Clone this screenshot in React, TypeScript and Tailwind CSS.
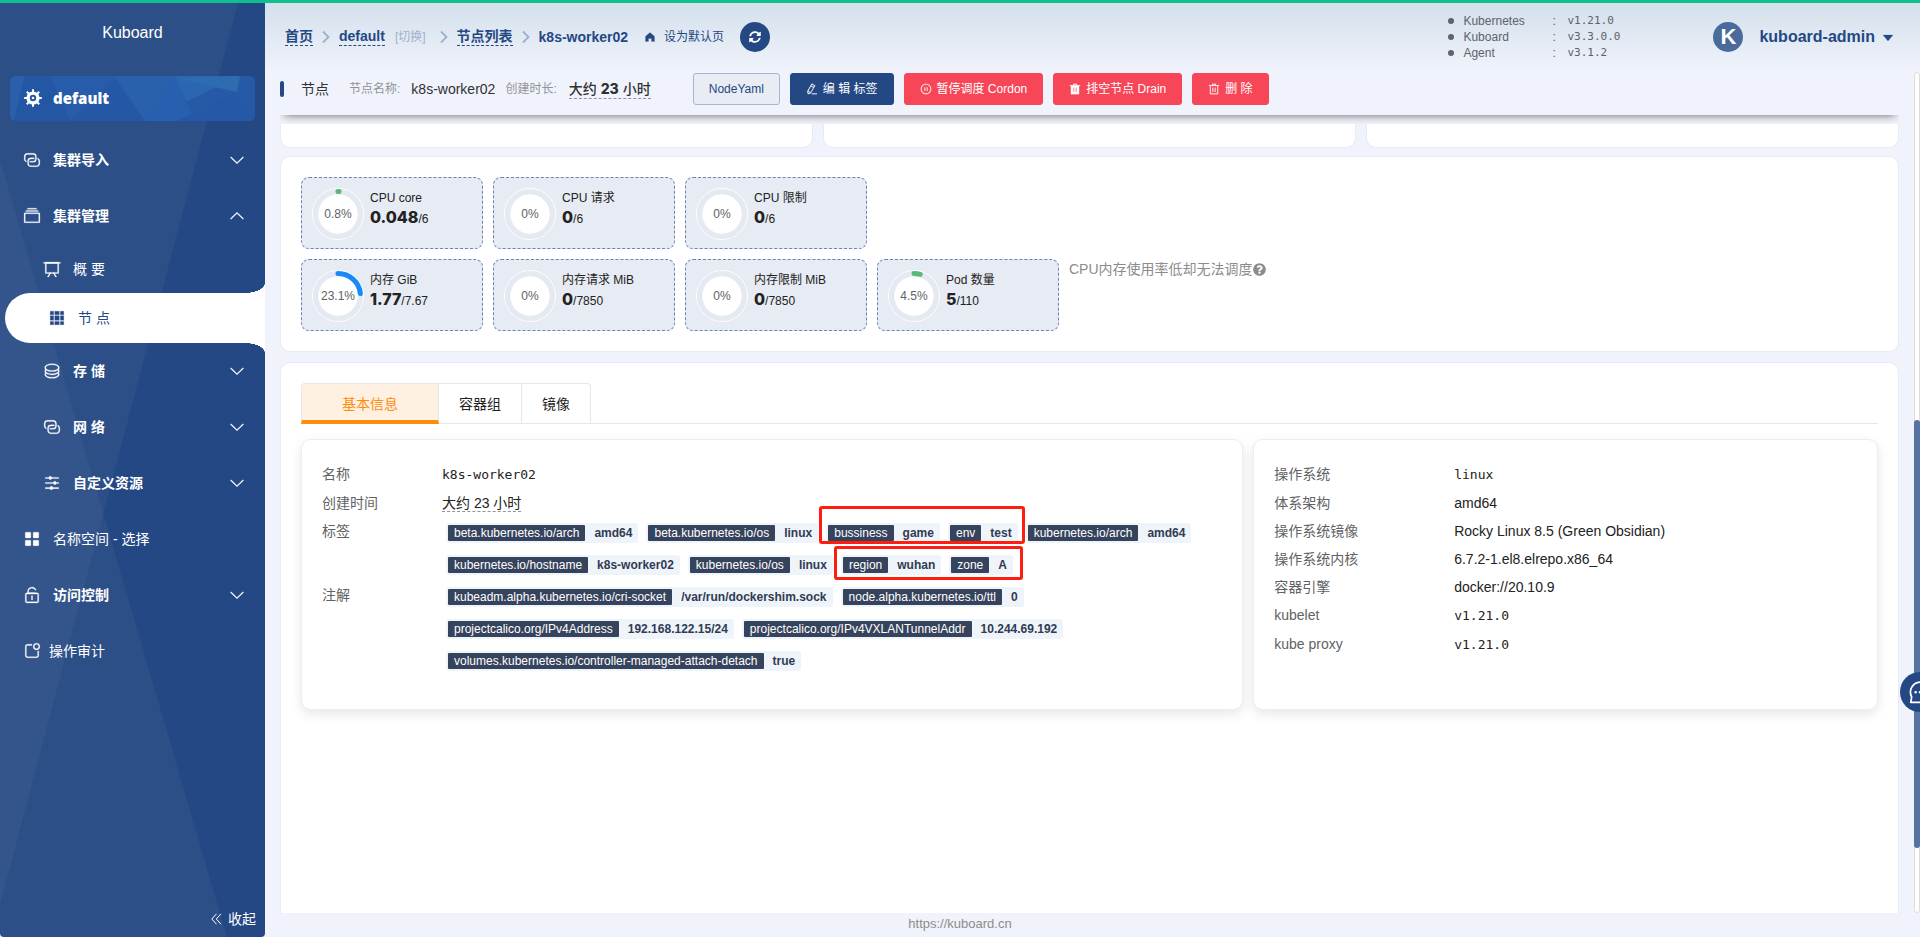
import React from "react";
import { FaQuestionCircle, FaSyncAlt } from "react-icons/fa";

const ICONS = {
  connection: [
    "M640 384v64H448a128 128 0 0 0-128 128v128a128 128 0 0 0 128 128h320a128 128 0 0 0 128-128V576a128 128 0 0 0-64-110.848V394.88c74.56 26.368 128 97.472 128 181.056v128a192 192 0 0 1-192 192H448a192 192 0 0 1-192-192V576a192 192 0 0 1 192-192h192z",
    "M384 640v-64h192a128 128 0 0 0 128-128V320a128 128 0 0 0-128-128H256a128 128 0 0 0-128 128v128a128 128 0 0 0 64 110.848v70.272A192.064 192.064 0 0 1 64 448V320a192 192 0 0 1 192-192h320a192 192 0 0 1 192 192v128a192 192 0 0 1-192 192H384z",
  ],
  files: [
    "M128 384v448h768V384H128zm-32-64h832a32 32 0 0 1 32 32v512a32 32 0 0 1-32 32H96a32 32 0 0 1-32-32V352a32 32 0 0 1 32-32zm64-128h704v64H160zm96-128h512v64H256z",
  ],
  board: [
    "M32 128h960v64H32z",
    "M192 192v512h640V192H192zm-64-64h768v608a32 32 0 0 1-32 32H160a32 32 0 0 1-32-32V128z",
    "M322.176 960H248.32l144.64-250.56 55.424 32L322.176 960zm453.888 0h-73.856L576 741.44l55.424-32L776.064 960z",
  ],
  grid: [
    "M640 384v256H384V384h256zm64 0h192v256H704V384zm-64 512H384V704h256v192zm64 0V704h192v192H704zm-64-768v192H384V128h256zm64 0h192v192H704V128zM320 384v256H128V384h192zm0 512H128V704h192v192zm0-768v192H128V128h192z",
  ],
  coin: [
    "m161.92 580.736 29.888 58.88C171.328 659.776 160 681.728 160 704c0 82.304 155.328 160 352 160s352-77.696 352-160c0-22.272-11.392-44.16-31.808-64.32l30.464-58.432C903.936 615.808 928 657.664 928 704c0 129.728-188.544 224-416 224S96 833.728 96 704c0-46.592 24.32-88.576 65.92-123.264z",
    "m161.92 388.736 29.888 58.88C171.328 467.84 160 489.792 160 512c0 82.304 155.328 160 352 160s352-77.696 352-160c0-22.272-11.392-44.16-31.808-64.32l30.464-58.432C903.936 423.808 928 465.664 928 512c0 129.728-188.544 224-416 224S96 641.728 96 512c0-46.592 24.32-88.576 65.92-123.264z",
    "M512 544c-227.456 0-416-94.272-416-224S284.544 96 512 96s416 94.272 416 224-188.544 224-416 224zm0-64c196.672 0 352-77.696 352-160S708.672 160 512 160s-352 77.696-352 160 155.328 160 352 160z",
  ],
  operation: [
    "M389.44 768a96.064 96.064 0 0 1 181.12 0H896v64H570.56a96.064 96.064 0 0 1-181.12 0H128v-64h261.44zm192-288a96.064 96.064 0 0 1 181.12 0H896v64H762.56a96.064 96.064 0 0 1-181.12 0H128v-64h453.44zm-256-288a96.064 96.064 0 0 1 181.12 0H896v64H506.56a96.064 96.064 0 0 1-181.12 0H128v-64h197.44z",
  ],
  menu: [
    "M160 448a32 32 0 0 1-32-32V160.064a32 32 0 0 1 32-32h256a32 32 0 0 1 32 32V416a32 32 0 0 1-32 32H160zm448 0a32 32 0 0 1-32-32V160.064a32 32 0 0 1 32-32h255.936a32 32 0 0 1 32 32V416a32 32 0 0 1-32 32H608zM160 896a32 32 0 0 1-32-32V608a32 32 0 0 1 32-32h256a32 32 0 0 1 32 32v256a32 32 0 0 1-32 32H160zm448 0a32 32 0 0 1-32-32V608a32 32 0 0 1 32-32h255.936a32 32 0 0 1 32 32v256a32 32 0 0 1-32 32H608z",
  ],
  unlock: [
    "M224 448a32 32 0 0 0-32 32v384a32 32 0 0 0 32 32h576a32 32 0 0 0 32-32V480a32 32 0 0 0-32-32H224zm0-64h576a96 96 0 0 1 96 96v384a96 96 0 0 1-96 96H224a96 96 0 0 1-96-96V480a96 96 0 0 1 96-96z",
    "M512 544a32 32 0 0 1 32 32v192a32 32 0 1 1-64 0V576a32 32 0 0 1 32-32zm178.304-295.296A192.064 192.064 0 0 0 320 320v64h352l96 38.4V448H256V320a256 256 0 0 1 493.76-95.104l-59.456 23.808z",
  ],
  notification: [
    "M512 128v64H256a64 64 0 0 0-64 64v512a64 64 0 0 0 64 64h512a64 64 0 0 0 64-64V512h64v256a128 128 0 0 1-128 128H256a128 128 0 0 1-128-128V256a128 128 0 0 1 128-128h256z",
    "M768 384a128 128 0 1 0 0-256 128 128 0 0 0 0 256zm0 64a192 192 0 1 1 0-384 192 192 0 0 1 0 384z",
  ],
  arrowDown: [
    "M831.872 340.864 512 652.672 192.128 340.864a30.592 30.592 0 0 0-42.752 0 29.12 29.12 0 0 0 0 41.6L489.664 714.24a32 32 0 0 0 44.672 0l340.288-331.712a29.12 29.12 0 0 0 0-41.728 30.592 30.592 0 0 0-42.752 0z",
  ],
  trash: [
    "M160 256H96a32 32 0 0 1 0-64h256V95.936a32 32 0 0 1 32-32h256a32 32 0 0 1 32 32V192h256a32 32 0 1 1 0 64h-64v672a32 32 0 0 1-32 32H192a32 32 0 0 1-32-32V256zm448-64v-64H416v64h192zM224 896h576V256H224v640zm192-128a32 32 0 0 1-32-32V416a32 32 0 0 1 64 0v320a32 32 0 0 1-32 32zm192 0a32 32 0 0 1-32-32V416a32 32 0 0 1 64 0v320a32 32 0 0 1-32 32z",
  ],
  trashFilled: [
    "M352 192V95.936a32 32 0 0 1 32-32h256a32 32 0 0 1 32 32V192h256a32 32 0 1 1 0 64H96a32 32 0 0 1 0-64h256zm64 0h192v-64H416v64zM192 960a32 32 0 0 1-32-32V256h704v672a32 32 0 0 1-32 32H192zm224-192a32 32 0 0 0 32-32V416a32 32 0 0 0-64 0v320a32 32 0 0 0 32 32zm192 0a32 32 0 0 0 32-32V416a32 32 0 0 0-64 0v320a32 32 0 0 0 32 32z",
  ],
  pause: [
    "M512 64a448 448 0 1 1 0 896 448 448 0 0 1 0-896zm0 832a384 384 0 0 0 0-768 384 384 0 0 0 0 768zm-96-544q32 0 32 32v256q0 32-32 32t-32-32V384q0-32 32-32zm192 0q32 0 32 32v256q0 32-32 32t-32-32V384q0-32 32-32z",
  ],
  pen: [
    "m199.04 672.64 193.984 112 224-387.968-193.92-112-224 388.032zm-23.872 60.16 32.896 148.288 144.896-45.696L175.168 732.8zM455.04 229.248l193.92 112 56.704-98.112-193.984-112-56.64 98.112zM104.32 708.8l384-665.024 304.768 175.936L409.152 884.8h.064l-248.448 78.336L104.32 708.8zm384 254.272v-64h448v64h-448z",
  ],
  home: ["M512 128 128 447.936V896h255.936V640H640v256h255.936V447.936z"],
  caret: ["m192 384 320 384 320-384z"],
};

type IconName = keyof typeof ICONS;

function Icon({ name, className = "" }: { name: IconName; className?: string }) {
  return (
    <svg
      viewBox="0 0 1024 1024"
      fill="currentColor"
      stroke="currentColor"
      strokeWidth="14"
      aria-hidden="true"
      className={`shrink-0 ${className}`}
    >
      {ICONS[name].map((d) => (
        <path key={d} d={d} />
      ))}
    </svg>
  );
}

function HelmIcon() {
  return (
    <svg viewBox="0 0 20 20" aria-hidden="true" className="size-5 shrink-0" fill="none" stroke="#fff">
      <circle cx="10" cy="10" r="4.9" strokeWidth="3.400" />
      <circle cx="10" cy="10" r="1.300" fill="#fff" stroke="none" />
      {[0, 45, 90, 135, 180, 225, 270, 315].map((a) => (
        <path key={a} d="M10 4.500V1.200" strokeWidth="2" transform={`rotate(${a} 10 10)`} />
      ))}
    </svg>
  );
}

type Item = { icon: IconName; label: string; group?: boolean; open?: boolean; sub?: boolean; tight?: boolean };

function NavRow({ icon, label, group, open, sub, tight }: Item) {
  const body = (
    <>
      <Icon name={icon} className="size-[18px]" />
      <span className={tight ? "ml-2" : "ml-3"}>{label}</span>
      {group && <Icon name="arrowDown" className={`ml-auto size-[18px] ${open ? "rotate-180" : ""}`} />}
    </>
  );
  const pad = sub ? "pl-[43px]" : "pl-[23px]";
  return group ? (
    <button type="button" aria-expanded={!!open} className={`flex h-14 w-full items-center pr-[19px] text-left font-bold ${pad}`}>
      {body}
    </button>
  ) : (
    <a href="#" className={`flex items-center pr-[19px] ${sub ? "h-[49px]" : "h-14"} ${pad}`}>
      {body}
    </a>
  );
}

function Sidebar() {
  return (
    <aside className="relative flex w-[265px] shrink-0 flex-col overflow-hidden rounded-b bg-[#244884] text-sm text-white">
      <svg viewBox="0 0 265 934" preserveAspectRatio="none" aria-hidden="true" className="absolute inset-0 size-full">
        <path d="M0 0H238L0 902z" fill="#fff" fillOpacity="0.04" />
        <path d="M0 157 227 934H0z" fill="#fff" fillOpacity="0.04" />
      </svg>
      <div className="relative flex flex-1 flex-col">
        <h1 className="pt-[18px] text-center text-base leading-6">Kuboard</h1>
        <a href="#" className="relative mx-[10px] mt-[31px] flex h-[45px] items-center overflow-hidden rounded-md bg-[#265aa6] pl-[13px]">
          <svg viewBox="0 0 245 45" preserveAspectRatio="none" aria-hidden="true" className="absolute inset-0 size-full">
            <path d="M0 0h15L4 45H0z" fill="#2b5fac" />
            <path d="M15 0h25l20 45H4z" fill="#2356a3" />
            <path d="M40 0h65L60 45z" fill="#275caa" />
            <path d="M105 4 135 45H60z" fill="#2458a6" />
            <path d="M105 0h60l-30 45z" fill="#2a61ad" />
            <path d="M165 0h65l-95 45z" fill="#2b66b0" />
            <path d="m165 0 20 45h-50z" fill="#285fae" />
            <path d="M230 0l-3 16-62-14z" fill="#2e6cb2" />
            <path d="m227 16-60 29h78z" fill="#2558a7" />
            <path d="M230 0h15v45z" fill="#2659a6" />
          </svg>
          <span className="relative flex items-center gap-[10px]">
            <HelmIcon />
            <span className="font-['Open_Sans'] text-[15px] font-extrabold">default</span>
          </span>
        </a>
        <nav className="mt-[11px]">
          <NavRow icon="connection" label="集群导入" group />
          <NavRow icon="files" label="集群管理" group open />
          <NavRow icon="board" label="概 要" sub />
          <a
            href="#"
            aria-current="page"
            className="relative ml-[5px] flex h-[50px] items-center gap-3 rounded-l-full bg-white pl-[43px] text-[#244884]"
          >
            <span className="absolute right-0 -top-[10px] h-[10px] w-5 bg-[radial-gradient(ellipse_20px_10px_at_0_0,transparent_98%,white_100%)]" />
            <Icon name="grid" className="size-[18px]" />
            节 点
            <span className="absolute right-0 -bottom-[10px] h-[10px] w-5 bg-[radial-gradient(ellipse_20px_10px_at_0_100%,transparent_98%,white_100%)]" />
          </a>
          <NavRow icon="coin" label="存 储" group sub />
          <NavRow icon="connection" label="网 络" group sub />
          <NavRow icon="operation" label="自定义资源" group sub />
          <NavRow icon="menu" label="名称空间 - 选择" />
          <NavRow icon="unlock" label="访问控制" group />
          <NavRow icon="notification" label="操作审计" tight />
        </nav>
        <button type="button" className="mt-auto mb-2 flex items-center gap-1.5 self-end pr-[9px] leading-5">
          <svg viewBox="0 0 12 12" aria-hidden="true" className="size-3" fill="none" stroke="currentColor">
            <path d="M6.500 .8 1.800 6l4.700 5.200M11 .8 6.300 6l4.700 5.200" />
          </svg>
          收起
        </button>
      </div>
    </aside>
  );
}

function Crumb({ children }: { children: string }) {
  return (
    <a href="#" className="border-b border-dashed border-[#244884] leading-[17px]">
      {children}
    </a>
  );
}

function CrumbArrow() {
  return (
    <svg viewBox="0 0 8 14" aria-hidden="true" className="mx-[9px] h-3.5 w-2 shrink-0" fill="none" stroke="#9fb0cc" strokeWidth="1.800">
      <path d="M1 1.500 6.500 7 1 12.500" />
    </svg>
  );
}

const VERSIONS = [
  ["Kubernetes", "v1.21.0"],
  ["Kuboard", "v3.3.0.0"],
  ["Agent", "v3.1.2"],
];

function TopBar() {
  return (
    <header className="flex h-[68px] items-center pr-6 pl-5 text-sm">
      <nav aria-label="breadcrumb" className="flex items-center font-bold text-[#244884]">
        <Crumb>首页</Crumb>
        <CrumbArrow />
        <Crumb>default</Crumb>
        <button type="button" className="mr-[5px] ml-[10px] text-xs font-normal text-[#9fb0cc]">
          [切换]
        </button>
        <CrumbArrow />
        <Crumb>节点列表</Crumb>
        <CrumbArrow />
        <span>k8s-worker02</span>
      </nav>
      <button type="button" className="ml-4 flex items-center gap-2 text-xs text-[#244884]">
        <Icon name="home" className="size-3" />
        设为默认页
      </button>
      <button
        type="button"
        aria-label="刷新"
        className="ml-4 flex size-[30px] items-center justify-center rounded-full bg-[#244884] text-white"
      >
        <FaSyncAlt className="size-3" />
      </button>
      <ul className="ml-auto w-[265px] text-xs leading-4 text-[#606266]">
        {VERSIONS.map(([name, version]) => (
          <li key={name} className="flex items-center">
            <span className="mr-[9px] size-1.5 rounded-full bg-[#606266]" />
            <span className="w-[89px]">{name}</span>
            <span className="w-[15px]">:</span>
            <span className="font-['DejaVu_Sans_Mono'] text-[11px]">{version}</span>
          </li>
        ))}
      </ul>
      <span className="flex size-[30px] items-center justify-center rounded-full bg-[#4a6a9c] text-[22px] font-bold text-white">K</span>
      <button type="button" className="ml-4 flex items-center gap-[5px] text-base font-bold text-[#244884]">
        kuboard-admin
        <Icon name="caret" className="size-4" />
      </button>
    </header>
  );
}

function Action({ icon, label, tone }: { icon?: IconName; label: string; tone: "plain" | "blue" | "red" }) {
  const tones = {
    plain: "border-[#a7b6cf] bg-[#e9ecf3] text-[#244884]",
    blue: "border-[#244884] bg-[#244884] text-white",
    red: "border-[#f64658] bg-[#f64658] text-white",
  };
  return (
    <button type="button" className={`flex h-8 items-center gap-[5px] rounded-[3px] border px-[15px] text-xs whitespace-nowrap ${tones[tone]}`}>
      {icon && <Icon name={icon} className="size-3" />}
      {label}
    </button>
  );
}

function Toolbar() {
  return (
    <div className="relative z-10 overflow-hidden pb-[9px]">
      <div className="flex items-center bg-[#f0f3fb] pt-0.5 pb-[10px] shadow-[0_4px_9px_-4px_rgba(0,0,0,0.6)]">
        <span className="h-4 w-1 rounded-sm bg-[#244884]" />
        <h2 className="ml-[17px] text-sm text-[#303133]">节点</h2>
        <span className="ml-5 text-xs text-[#909399]">节点名称:</span>
        <span className="ml-[11px] text-sm text-[#303133]">k8s-worker02</span>
        <span className="ml-[10px] text-xs text-[#909399]">创建时长:</span>
        <span className="ml-3 border-b border-dashed border-[#909399] font-['Inter','Noto_Sans_CJK_SC',sans-serif] text-sm leading-[19px] text-[#303133]">
          <span className="font-medium">大约</span> <b className="font-extrabold">23</b> <span className="font-medium">小时</span>
        </span>
        <div className="ml-[42px] flex gap-[10px]">
          <Action tone="plain" label="NodeYaml" />
          <Action tone="blue" icon="pen" label="编 辑 标签" />
          <Action tone="red" icon="pause" label="暂停调度 Cordon" />
          <Action tone="red" icon="trashFilled" label="排空节点 Drain" />
          <Action tone="red" icon="trash" label="删 除" />
        </div>
      </div>
    </div>
  );
}

type Stat = { title: string; value: string; total: string; percent: number; color: string };

const CPU_STATS: Stat[] = [
  { title: "CPU core", value: "0.048", total: "6", percent: 0.8, color: "#5cb87a" },
  { title: "CPU 请求", value: "0", total: "6", percent: 0, color: "#5cb87a" },
  { title: "CPU 限制", value: "0", total: "6", percent: 0, color: "#5cb87a" },
];
const MEM_STATS: Stat[] = [
  { title: "内存 GiB", value: "1.77", total: "7.67", percent: 23.1, color: "#1989fa" },
  { title: "内存请求 MiB", value: "0", total: "7850", percent: 0, color: "#5cb87a" },
  { title: "内存限制 MiB", value: "0", total: "7850", percent: 0, color: "#5cb87a" },
  { title: "Pod 数量", value: "5", total: "110", percent: 4.5, color: "#5cb87a" },
];

function StatCard({ title, value, total, percent, color }: Stat) {
  return (
    <article className="flex h-[72px] w-[182px] gap-[6px] rounded-lg border border-dashed border-[#6b84b0] bg-[#e7ebf3] p-[10px] text-xs text-[#222]">
      <div className="relative flex size-[52px] shrink-0 items-center justify-center">
        <svg viewBox="0 0 52 52" aria-hidden="true" className="absolute inset-0 size-full" fill="none">
          <circle cx="26" cy="26" r="25.500" stroke="#fff" />
          <circle cx="26" cy="26" r="19.800" fill="#fff" />
          <circle cx="26" cy="26" r="22.500" stroke="#e5e9f2" strokeWidth="5" />
          {percent > 0 && (
            <circle
              cx="26"
              cy="26"
              r="22.500"
              stroke={color}
              strokeWidth="5"
              strokeLinecap="round"
              pathLength="100"
              strokeDasharray={`${percent} 100`}
              transform="rotate(-90 26 26)"
            />
          )}
        </svg>
        <span className="relative text-[#606266]">{percent}%</span>
      </div>
      <div className="leading-[21px] whitespace-nowrap">
        <div>{title}</div>
        <div>
          <b className="font-['Inter'] text-base leading-none font-extrabold">{value}</b>/{total}
        </div>
      </div>
    </article>
  );
}

type TagData = [string, string];

function Tag({ name, value }: { name: string; value: string }) {
  return (
    <span className="flex h-5 items-center rounded-[3px] bg-[#eef4f9] pl-0.5 text-xs whitespace-nowrap">
      <span className="rounded-[1px] bg-[#36435c] px-1.5 leading-4 text-white">{name}</span>
      <b className="pr-1.5 pl-[9px] text-[#303b52]">{value}</b>
    </span>
  );
}

function Marked({ tags, frame }: { tags: TagData[]; frame: string }) {
  return (
    <span className="relative flex gap-2">
      {tags.map(([n, v]) => (
        <Tag key={n} name={n} value={v} />
      ))}
      <span className={`absolute rounded-[3px] border-[3px] border-[#ff1d0f] ${frame}`} />
    </span>
  );
}

const ANNOTATIONS: TagData[] = [
  ["kubeadm.alpha.kubernetes.io/cri-socket", "/var/run/dockershim.sock"],
  ["node.alpha.kubernetes.io/ttl", "0"],
  ["projectcalico.org/IPv4Address", "192.168.122.15/24"],
  ["projectcalico.org/IPv4VXLANTunnelAddr", "10.244.69.192"],
  ["volumes.kubernetes.io/controller-managed-attach-detach", "true"],
];

const SYSTEM: { label: string; value: string; mono?: boolean }[] = [
  { label: "操作系统", value: "linux", mono: true },
  { label: "体系架构", value: "amd64" },
  { label: "操作系统镜像", value: "Rocky Linux 8.5 (Green Obsidian)" },
  { label: "操作系统内核", value: "6.7.2-1.el8.elrepo.x86_64" },
  { label: "容器引擎", value: "docker://20.10.9" },
  { label: "kubelet", value: "v1.21.0", mono: true },
  { label: "kube proxy", value: "v1.21.0", mono: true },
];

function Row({ label, wide, mono, children }: { label: string; wide?: boolean; mono?: boolean; children: React.ReactNode }) {
  return (
    <div className={`flex ${mono ? "leading-[29px]" : "leading-7"}`}>
      <dt className={`shrink-0 text-[#606266] ${wide ? "w-[180px]" : "w-[120px]"}`}>{label}</dt>
      <dd className={`min-w-0 text-[#222] ${mono ? "font-['DejaVu_Sans_Mono'] text-[13px]" : ""}`}>{children}</dd>
    </div>
  );
}

const TAG_LIST = "flex flex-wrap gap-x-2 gap-y-3 py-1.5 pl-1";
const DETAIL = "rounded-[10px] border border-[#ebeef5] bg-white px-5 pt-5 pb-8 text-sm shadow-[0_4px_12px_rgba(0,0,0,0.1)]";

function BasicInfo() {
  return (
    <div className="mt-[15px] grid grid-cols-5 gap-[10px]">
      <dl className={`col-span-3 ${DETAIL}`}>
        <Row label="名称" mono>
          k8s-worker02
        </Row>
        <Row label="创建时间">
          <span className="border-b border-dashed border-[#909399]">大约 23 小时</span>
        </Row>
        <Row label="标签">
          <div className={TAG_LIST}>
            <Tag name="beta.kubernetes.io/arch" value="amd64" />
            <Tag name="beta.kubernetes.io/os" value="linux" />
            <Marked
              tags={[
                ["bussiness", "game"],
                ["env", "test"],
              ]}
              frame="-inset-x-[7px] -top-[17px] -bottom-px"
            />
            <Tag name="kubernetes.io/arch" value="amd64" />
            <Tag name="kubernetes.io/hostname" value="k8s-worker02" />
            <Tag name="kubernetes.io/os" value="linux" />
            <Marked
              tags={[
                ["region", "wuhan"],
                ["zone", "A"],
              ]}
              frame="-left-[7px] -right-[10px] -top-[9px] -bottom-[5px]"
            />
          </div>
        </Row>
        <Row label="注解">
          <div className={TAG_LIST}>
            {ANNOTATIONS.map(([n, v]) => (
              <Tag key={n} name={n} value={v} />
            ))}
          </div>
        </Row>
      </dl>
      <dl className={`col-span-2 ${DETAIL}`}>
        {SYSTEM.map((r) => (
          <Row key={r.label} label={r.label} mono={r.mono} wide>
            {r.value}
          </Row>
        ))}
      </dl>
    </div>
  );
}

export default function App() {
  return (
    <div className="flex h-screen flex-col overflow-hidden bg-[#f0f3fb] font-['Liberation_Sans','Noto_Sans_CJK_SC',sans-serif]">
      <div className="h-[3px] shrink-0 bg-[#10bf8e]" />
      <div className="flex min-h-0 flex-1">
        <Sidebar />
        <div className="relative flex min-w-0 flex-1 flex-col bg-linear-to-b from-[#d3e0ec] to-[#f0f3fb] to-[68px]">
          <TopBar />
          <div className="flex min-h-0 flex-1">
            <main className="flex min-w-0 flex-1 flex-col px-[15px]">
              <Toolbar />
              <div className="flex min-h-0 flex-1 flex-col">
                <div className="grid shrink-0 grid-cols-3 gap-[10px]">
                  {[0, 1, 2].map((i) => (
                    <div key={i} className="h-6 rounded-b-[10px] border border-t-0 border-[#e8ebf3] bg-white" />
                  ))}
                </div>
                <section className="mt-2 flex shrink-0 flex-col gap-[10px] rounded-[10px] border border-[#e8ebf3] bg-white p-5">
                  <div className="flex gap-[10px]">
                    {CPU_STATS.map((s) => (
                      <StatCard key={s.title} {...s} />
                    ))}
                  </div>
                  <div className="flex gap-[10px]">
                    {MEM_STATS.map((s) => (
                      <StatCard key={s.title} {...s} />
                    ))}
                    <p className="flex h-5 items-center text-sm text-[#8c8c8c]">
                      CPU内存使用率低却无法调度
                      <FaQuestionCircle className="size-[13px]" />
                    </p>
                  </div>
                </section>
                <section className="mt-[10px] min-h-0 flex-1 rounded-t-[10px] border border-b-0 border-[#e8ebf3] bg-white px-5 pt-5">
                  <div role="tablist" className="flex h-[41px] border-b border-[#e4e7ed] text-sm">
                    <button
                      type="button"
                      role="tab"
                      aria-selected="true"
                      className="-mb-px rounded-tl border border-b-4 border-[#e4e7ed] border-b-[#ff8c0a] bg-[#fff1e2] px-10 pt-[3px] text-[#ff8c0a]"
                    >
                      基本信息
                    </button>
                    <button type="button" role="tab" aria-selected="false" className="border-t border-r border-[#e4e7ed] px-5 text-[#222]">
                      容器组
                    </button>
                    <button type="button" role="tab" aria-selected="false" className="rounded-tr border-t border-r border-[#e4e7ed] px-5 text-[#222]">
                      镜像
                    </button>
                  </div>
                  <BasicInfo />
                </section>
              </div>
            </main>
            <div className="mt-px mb-6 flex w-1.5 flex-col rounded border border-[#dcdcdc] bg-white">
              <div className="-mx-px mt-[347px] h-[428px] rounded-[3px] bg-[#5672a1]" />
            </div>
          </div>
          <footer className="absolute inset-x-0 bottom-0 flex h-6 justify-center bg-[#f0f3fb] pr-[265px] text-[13px] leading-[22px] text-[#8c8c8c]">
            <a href="https://kuboard.cn">https://kuboard.cn</a>
          </footer>
          <button
            type="button"
            aria-label="反馈"
            className="absolute top-[669px] -right-5 z-20 flex size-10 items-center justify-center rounded-full bg-[#244884] text-white"
          >
            <svg viewBox="0 0 24 24" aria-hidden="true" className="size-[26px]" fill="none" stroke="currentColor" strokeWidth="1.600">
              <path d="M3.500 21.500h9A9.300 9.300 0 1 0 4.300 16.600z" strokeLinejoin="round" />
              <path d="M8 12.200h.01M12 12.200h.01M16 12.200h.01" strokeWidth="2.400" strokeLinecap="round" />
            </svg>
          </button>
        </div>
      </div>
    </div>
  );
}
